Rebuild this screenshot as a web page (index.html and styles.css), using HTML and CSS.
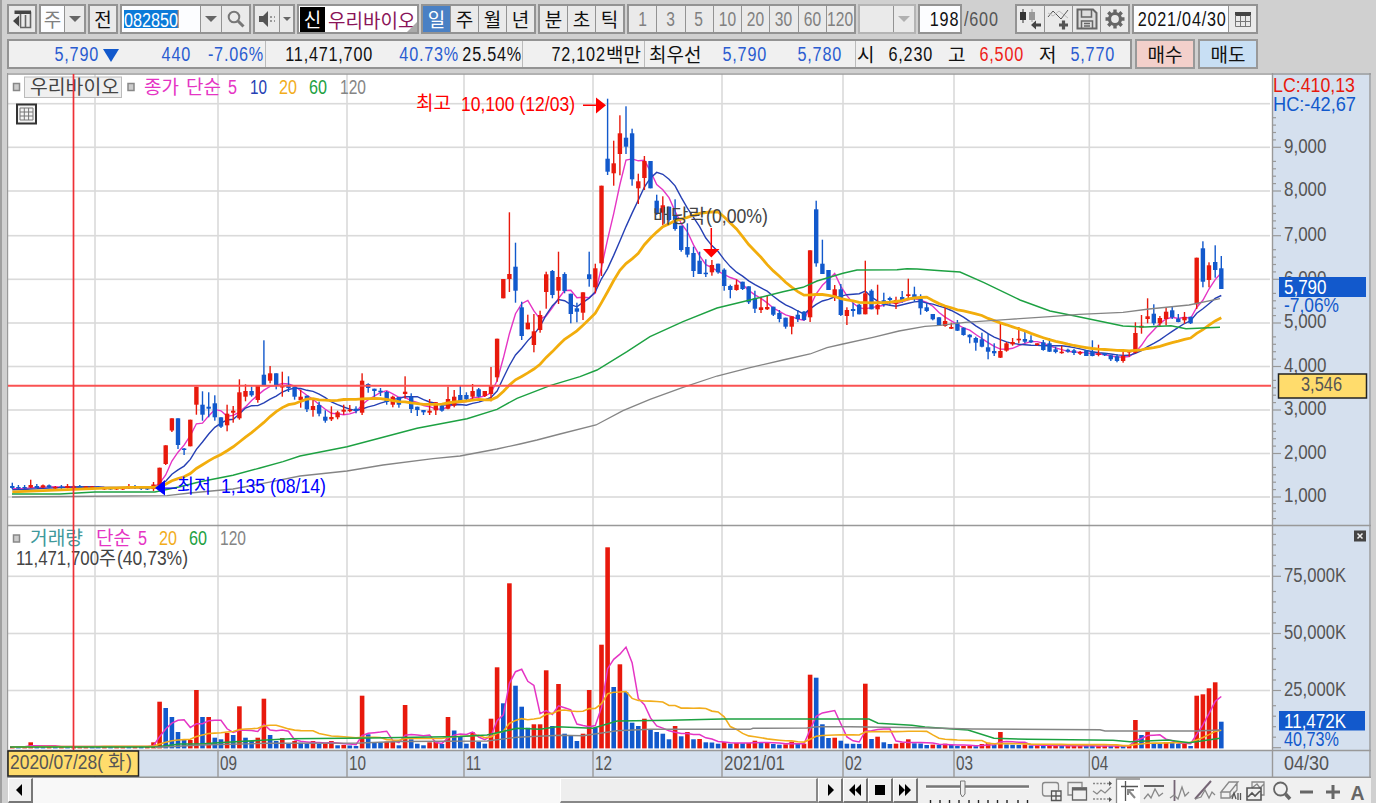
FILE: index.html
```
<!DOCTYPE html>
<html lang="ko">
<head>
    <meta charset="UTF-8">
    <title>우리바이오 차트</title>
    <link rel="stylesheet" href="styles.css">
</head>
<body>
    <div class="ventana">
        <!-- Barra superior -->
        <div class="toolbar">
            <div class="group w30"><button class="cell grow"><svg width="22" height="22" viewBox="0 0 22 22"><path d="M4 4.500H19.500V19.500H9M9.500 6V19M14.500 7V19" fill="none" stroke="#666" stroke-width="1.600"/><path d="M3.500 2.500H20V6H3.500ZM2 13L8 7.500V18.500Z" fill="#444"/></svg></button></div>
            <div class="group w47"><span class="cell white grow gray">주</span><button class="cell w20"><i class="down"></i></button></div>
            <div class="group w30"><button class="cell grow">전</button></div>
            <div class="group w131">
                <span class="cell white grow left"><span class="n sel">082850</span></span>
                <button class="cell w21"><i class="down"></i></button>
                <button class="cell w29"><svg width="20" height="20" viewBox="0 0 20 20"><circle cx="8" cy="8" r="5.300" fill="none" stroke="#777" stroke-width="2"/><path d="M12 12L17.500 17.500" stroke="#777" stroke-width="3"/></svg></button>
            </div>
            <div class="group w42"><button class="cell grow"><svg width="20" height="20" viewBox="0 0 20 20"><path d="M2 7H6L11 2V18L6 13H2Z" fill="#555"/><path d="M13 7h2v2h-2zM13 11h2v2h-2zM17 7h1v2h-1zM17 11h1v2h-1z" fill="#999"/></svg></button><button class="cell w15"><i class="down small"></i></button></div>
            <div class="group w122 white name"><b class="tag">신</b><span>우리바이오</span></div>
            <div class="group w115"><button class="cell on">일</button><button class="cell">주</button><button class="cell">월</button><button class="cell">년</button></div>
            <div class="group w87"><button class="cell">분</button><button class="cell">초</button><button class="cell">틱</button></div>
            <div class="group w229 gray period"><button class="cell"><span class="n">1</span></button><button class="cell"><span class="n">3</span></button><button class="cell"><span class="n">5</span></button><button class="cell"><span class="n">10</span></button><button class="cell"><span class="n">20</span></button><button class="cell"><span class="n">30</span></button><button class="cell"><span class="n">60</span></button><button class="cell"><span class="n">120</span></button></div>
            <div class="group w58 dim"><span class="cell grow"></span><button class="cell w21"><i class="down"></i></button></div>
            <div class="group w44"><span class="cell white grow right"><span class="n">198</span></span></div>
            <span class="total"><span class="n">/600</span></span>
            <div class="group w115 icons">
                <button class="cell"><svg width="24" height="24" viewBox="0 0 24 24"><path d="M1 5h6v8H1zM3.500 2h1v14h-1z" fill="#333"/><path d="M10 5h6v8h-6zM12.500 2h1v13h-1z" fill="#999"/><path d="M12 18l5-4.500v3h5v3h-5v3z" fill="#444"/></svg></button>
                <button class="cell"><svg width="24" height="24" viewBox="0 0 24 24"><path d="M1 10L6 4L14 12L21 3" fill="none" stroke="#555"/><path d="M1 6L6 9L12 4L21 11" fill="none" stroke="#bbb"/><path d="M12 18h9M16.500 13.500v9" stroke="#555" stroke-width="3.200"/></svg></button>
                <button class="cell"><svg width="24" height="24" viewBox="0 0 24 24"><path d="M2.500 2.500H18L21.500 6V21.500H2.500Z" fill="#ddd" stroke="#666" stroke-width="2"/><path d="M6.500 3v7h10V3M6.500 21v-7h11v7M9 16.500h6M9 19h6" fill="none" stroke="#666" stroke-width="1.500"/></svg></button>
                <button class="cell"><svg width="24" height="24" viewBox="0 0 24 24"><circle cx="12" cy="12" r="5.500" fill="none" stroke="#666" stroke-width="3.200"/><path d="M12 2.500V6M12 18v3.500M2.500 12H6M18 12h3.500M5.300 5.300l2.500 2.500M16.200 16.200l2.500 2.500M18.700 5.300l-2.500 2.500M7.800 16.200l-2.500 2.500" stroke="#666" stroke-width="3.400"/></svg></button>
            </div>
            <div class="group w126"><span class="cell white grow right"><span class="n">2021/04/30</span></span><button class="cell w28"><svg width="18" height="18" viewBox="0 0 18 18"><path d="M1 2h16v4H1z" fill="#444"/><path d="M1.500 5V16.500H16.500V5M6.500 6v10M11.500 6v10M2 11.500h14" fill="none" stroke="#777"/></svg></button></div>
        </div>

        <!-- Precio actual -->
        <div class="quote">
            <div class="strip">
                <div class="part p1 blue"><span class="n v1">5,790</span><i class="fall"></i><span class="n v2">440</span><span class="n v3">-7.06%</span></div>
                <div class="part p2"><span class="n v4">11,471,700</span><span class="n v5 blue">40.73%</span><span class="n v6">25.54%</span></div>
                <div class="part p3"><span class="n">72,102</span><span>백만</span></div>
                <div class="part p4"><span>최우선</span><span class="n v7 blue">5,790</span><span class="n v8 blue">5,780</span></div>
                <div class="part p5"><span class="k">시</span><span class="n v9">6,230</span><span class="k">고</span><span class="n v9 red">6,500</span><span class="k">저</span><span class="n v9 blue">5,770</span></div>
            </div>
            <button class="order buy">매수</button>
            <button class="order sell">매도</button>
        </div>

        <svg class="chart" width="1364" height="705" viewBox="7 73 1364 705">
            <rect x="7" y="73" width="1364" height="705" fill="#fff"/>
            <rect x="1272" y="73" width="99" height="705" fill="#d5e0ee"/>
            <rect x="7" y="750" width="1364" height="28" fill="#d5e0ee"/>
            <g id="grid"></g>
            <g id="volume"></g>
            <g id="price"></g>
            <path d="M7 74H1371M7.500 73V778M7 525.500H1371M7 750.500H1371M7 777.300H1371M1272.500 73V778M1370 73V778" stroke="#999" stroke-width="1.400" fill="none"/>
            <g id="ticks"></g>

            <!-- Leyenda -->
            <g class="box"><rect x="13.500" y="83.500" width="6" height="7"/><rect x="128" y="83.500" width="6" height="7"/><rect x="13.500" y="535" width="6" height="7"/></g>
            <rect x="24.500" y="77" width="97" height="20.500" fill="#eee" fill-opacity=".9" stroke="#bbb"/>
            <path d="M17 104.500H36V123.500H17Z" fill="#f4f4f4" stroke="#333" stroke-width="2"/>
            <path d="M20 108H33V120H20ZM20 112H33M20 116H33M24.300 108V120M28.600 108V120" fill="none" stroke="#777"/>
            <path d="M8 385.800H1271" stroke="#fa5252" stroke-width="2"/>
            <g id="labels"></g>
            <path d="M73.500 74V750" stroke="#ee3036" stroke-width="1.700"/>
            <path d="M583 105.300H600M711.300 228V250" stroke="#f00" stroke-width="1.500"/>
            <path d="M596 97.500L606 105.300L596 113.500ZM703 249H719.500L711.300 257.500Z" fill="#f00"/>
            <path d="M165 480V495.500L155 488ZM165 487.500H177V488.700H165Z" fill="#00f"/>

            <rect x="1279" y="277" width="87" height="20" fill="#1259cc"/>
            <rect x="1279" y="711" width="86" height="19.500" fill="#1259cc"/>
            <rect x="1278.500" y="374" width="88" height="24" fill="#ffdc6c" stroke="#222" stroke-width="1.500"/>
            <rect x="8" y="751" width="130.500" height="25" fill="#ffdc6c" stroke="#222" stroke-width="1.500"/>
            <rect x="1354" y="530.500" width="12" height="11" fill="#444"/>
            <path d="M1357.500 533.500L1362.500 538.500M1362.500 533.500L1357.500 538.500" stroke="#eee" stroke-width="1.500"/>
            <g id="tags"></g>
        </svg>

        <!-- Barra inferior -->
        <div class="bottom">
            <button class="sb"><svg width="10" height="12" viewBox="0 0 10 12"><path d="M7 0V12L1 6Z"/></svg></button>
            <div class="track"><div class="thumb"></div></div>
            <button class="sb"><svg width="10" height="12" viewBox="0 0 10 12"><path d="M3 0V12L9 6Z"/></svg></button>
            <button class="sb"><svg width="14" height="12" viewBox="0 0 14 12"><path d="M7 0V12L1 6ZM13 0V12L7 6Z"/></svg></button>
            <button class="sb"><svg width="10" height="12" viewBox="0 0 10 12"><path d="M0 1H10V11H0Z"/></svg></button>
            <button class="sb"><svg width="14" height="12" viewBox="0 0 14 12"><path d="M1 0V12L7 6ZM7 0V12L13 6Z"/></svg></button>
            <svg class="slider" width="118" height="25" viewBox="918 778 118 25"><path d="M926 786.500H1029" stroke="#777" stroke-width="2.500"/><path d="M926 788.500H1029" stroke="#fff"/><path d="M960.500 781H965V794L962.500 797L960.500 794Z" fill="#eee" stroke="#777"/><path d="M930.500 800v3M940 800v3M949.500 800v3M959 800v3M969 800v3M978.500 800v3M988 800v3M997.500 800v3M1007 800v3M1018 800v3M1027.500 800v3" stroke="#222" stroke-width="1.400"/></svg>
            <svg width="335" height="25" viewBox="1036 778 335 25" fill="none" stroke="#888" stroke-width="1.300">
                <path d="M1116 778H1140V803H1116Z" fill="#fff" stroke="none"/><path d="M1116.500 803V779H1140" stroke="#888"/>
                <path d="M1051 796H1045Q1042.500 796 1042.500 793V785Q1042.500 782.500 1045 782.500H1056Q1058.500 782.500 1058.500 785V790"/><path d="M1051.500 791H1061V800.500H1051.500ZM1056 791V800.500M1051.500 796H1061" stroke="#555"/>
                <path d="M1072 795H1068V782.500H1082V787"/><path d="M1072.500 788H1086.500V800H1072.500Z" stroke="#666"/><path d="M1072 787.500H1087V790.500H1072Z" fill="#666" stroke="none"/>
                <path d="M1093 783.500H1110M1093 799H1110" stroke-dasharray="2 1.500"/><path d="M1093 791L1097 794L1101 790L1105 793L1111 787"/><path d="M1109 781v5l3-2.500zM1109 797v5l3-2.500z" fill="#555" stroke="none"/>
                <path d="M1121 786.500H1138M1125.500 781V801" stroke="#555"/><path d="M1135 798L1128 790M1128 795V790H1134" stroke="#888" stroke-width="2"/>
                <path d="M1144 786H1164" stroke="#555" stroke-width="1.800"/><path d="M1144 799L1148 794L1151 798L1155 789L1159 796L1163 793"/>
                <path d="M1174.500 780V801" stroke="#756575" stroke-width="1.800"/><path d="M1170 798L1174 795L1178 799L1182 787L1185 796L1189 792"/>
                <path d="M1195 799L1211 781" stroke="#756575" stroke-width="2"/><path d="M1195 799L1201 797L1205 790L1209 798L1212 792L1215 795"/>
                <path d="M1221 792L1229 782H1238L1230 792ZM1221 792V798H1230V792M1230 798L1237 790V783"/><path d="M1232 799L1234 793L1236 799M1238 793V800M1240.500 793V800" stroke="#555"/>
                <path d="M1252 788V782H1264V795H1261M1252 788L1257 784L1260 788L1264 784"/><path d="M1247 788H1261V800H1247ZM1248 797L1252 793L1255 796L1260 791" stroke="#555" stroke-width="1.600"/>
                <circle cx="1280.500" cy="789" r="6.500" stroke="#666" stroke-width="1.800"/><path d="M1285.500 794L1290 799" stroke="#666" stroke-width="3.500"/>
                <path d="M1300 792H1313M1326 792H1340M1333 785V799" stroke="#666" stroke-width="3"/>
                <text x="1350.500" y="799.500" class="biga" textLength="14" lengthAdjust="spacingAndGlyphs">A</text>
            </svg>
        </div>
    </div>
    <script src="chart.js"></script>
</body>
</html>
```
FILE: styles.css
```
* {
    box-sizing: border-box;
}

body {
    margin: 0;
    width: 1376px;
    height: 803px;
    overflow: hidden;
    background-color: #d0d0d0;
    font-family: "Noto Sans CJK KR", sans-serif;
    font-size: 19px;
    color: #111;
}

.ventana {
    height: 803px;
    border-left: 2px solid #a0a0a0;
    padding: 4px 0 0 5px;
    display: flex;
    flex-direction: column;
}

.toolbar {
    display: flex;
    gap: 2px;
    height: 30px;
    flex: none;
}

.group {
    display: flex;
    flex: none;
    height: 30px;
    border: 2px solid #939393;
    background-color: #939393;
    gap: 1px;
}

.cell {
    flex: 1 1 0;
    min-width: 0;
    display: flex;
    align-items: center;
    justify-content: center;
    overflow: hidden;
    padding: 0;
    border: 0;
    background-color: #eaeaea;
    font: inherit;
    line-height: 24px;
    color: inherit;
    white-space: nowrap;
}

/* condensed digits */
.n {
    display: flex;
    justify-content: flex-end;
    flex: none;
    font-family: "Liberation Sans", sans-serif;
    font-size: 20.5px;
    letter-spacing: 1px;
    transform: scaleX(0.79);
    transform-origin: right;
}

.grow {
    flex: 1 1 0;
}

.white {
    background-color: #fcfdff;
}

.gray {
    color: #808080;
}

.left {
    justify-content: flex-start;
    padding-left: 2px;
}

.right {
    justify-content: flex-end;
    padding-right: 1px;
}

.period .n {
    letter-spacing: 0;
    transform: scaleX(0.76);
    transform-origin: center;
}

.w15, .w20, .w21, .w28, .w29 {
    flex: none;
}

.w15 { width: 13px; }
.w20 { width: 19px; }
.w21 { width: 20px; }
.w28 { width: 27px; }
.w29 { width: 27px; }
.w30 { width: 30px; }
.w42 { width: 42px; }
.w44 { width: 44px; }
.w47 { width: 47px; }
.w58 { width: 58px; }
.w87 { width: 87px; }
.w115 { width: 115px; }
.w122 { width: 122px; }
.w126 { width: 126px; }
.w131 { width: 131px; }
.w229 { width: 229px; }

.sel {
    background-color: #0b7ad8;
    color: #fff;
    height: 18px;
    line-height: 19px;
    letter-spacing: 0;
    transform-origin: left;
    border-right: 1px solid #f08030;
}

.down {
    border: 6px solid transparent;
    border-top: 6px solid #666;
    border-bottom: 0;
}

.small {
    border-width: 4px;
    border-top-width: 4px;
}

.dim .down {
    border-top-color: #b0b0b0;
}

.dim {
    border-color: #b4b4b4;
}

.name {
    background-color: #fff;
    color: #8a1458;
    align-items: center;
    gap: 3px;
    position: relative;
}

.name::after {
    content: "";
    position: absolute;
    right: 0;
    bottom: 0;
    border: 5px solid #aaa;
    border-top-color: transparent;
    border-left-color: transparent;
}

.name span {
    white-space: nowrap;
}

.tag {
    flex: none;
    width: 25px;
    height: 25px;
    line-height: 24px;
    margin-left: 1px;
    text-align: center;
    background-color: #000;
    color: #fff;
    font-weight: normal;
}

.on {
    background-color: #4a80c4;
    color: #fff;
}

.total {
    width: 51px;
    line-height: 30px;
    color: #555;
    flex: none;
    margin-right: -2px;
}

.total .n {
    justify-content: flex-start;
    transform-origin: left;
}

.quote {
    display: flex;
    gap: 3px;
    height: 30px;
    margin-top: 5px;
    flex: none;
}

.strip {
    display: flex;
    width: 1125px;
    border: 2px solid #939393;
    background-color: #f0f0f0;
    line-height: 26px;
}

.part {
    display: flex;
    flex: none;
    border-right: 1px solid #bbb;
    white-space: nowrap;
}

.part span {
    flex: none;
}

/* widths are before the 0.79 scale only for the text, not for the box */
.p1 { width: 257px; }
.p2 { width: 257px; }
.p3 { width: 122px; justify-content: flex-end; padding-right: 3px; }
.p4 { width: 211px; padding-left: 4px; }
.p5 { width: 262px; padding-left: 1px; gap: 15px; border: 0; }
.v1 { width: 90px; }
.v2 { width: 72px; }
.v3 { width: 73px; }
.v4 { width: 107px; }
.v5 { width: 86px; }
.v6 { width: 63px; }
.v7 { width: 66px; }
.v8 { width: 75px; }
.v9 { width: 45px; }
.k { width: 16px; }

.fall {
    margin: 8px 0 0 4px;
    width: 16px;
    height: 0;
    border: 8px solid transparent;
    border-top: 13px solid #1259cc;
    border-bottom: 0;
}

.blue {
    color: #2a5cd0;
}

.red {
    color: #ee2218;
}

.order {
    width: 60px;
    border: 2px solid #999;
    padding: 0;
    font: inherit;
    line-height: 24px;
    color: #111;
}

.buy {
    background-color: #f3d0cb;
}

.sell {
    background-color: #c8dff4;
}

.chart {
    display: block;
    flex: none;
    margin-top: 4px;
    font-family: "Liberation Sans", "Noto Sans CJK KR", sans-serif;
}

.chart text {
    white-space: pre;
}

.box rect {
    fill: #ccc;
    stroke: #888;
    stroke-width: 1.5;
}

.bottom {
    display: flex;
    height: 25px;
    flex: none;
    margin-left: 1px;
    width: 1363px;
    background-color: #f0f0f0;
}

.bottom > svg {
    flex: none;
}

.sb {
    width: 25px;
    height: 25px;
    flex: none;
    display: flex;
    align-items: center;
    justify-content: center;
    padding: 0;
    border: 1px solid #fff;
    border-right: 2px solid #777;
    border-bottom: 2px solid #777;
    background-color: #f0f0f0;
}

.track {
    flex: 1;
    background-color: #f8f8f8;
    display: flex;
    justify-content: flex-end;
}

.thumb {
    width: 258px;
    background-color: #eee;
    border: 1px solid #fff;
    border-right: 2px solid #888;
    border-bottom: 2px solid #888;
}

.biga {
    font: bold 21px "Liberation Sans", sans-serif;
    fill: #666;
    stroke: none;
}
```
FILE: chart.js
```
const NS = 'http://www.w3.org/2000/svg';
const RED = '#e8190c';
const BLUE = '#1259cc';

function add(parent, tag, attrs, text) {
    const el = document.createElementNS(NS, tag);
    for (const k in attrs) el.setAttribute(k, attrs[k]);
    if (text) el.textContent = text;
    document.getElementById(parent).appendChild(el);
}

// one candle per row: colour, high, body top, body bottom, low
const candles = `
b 482.7 486 488 489
b 485 487 488.5 489
b 485 487 488.5 489
r 479.7 485 487.5 488
b 484 486 488 488
r 484.5 485.300 487.500 488
b 484.5 485.300 487.500 488
r 486 487 488 490
b 485 486.5 488 489
r 484 486 488 488.500
r 485 486.500 488 488
b 485 486 488.500 489
r 486 486.500 487.500 488
r 486 486.500 487.500 488
b 486 486.500 488 488.500
r 487 488 489.500 490
b 487 488 489 490
r 487 488 489.500 490
r 487 488 489.500 490
r 484 486 488 489
b 485 486 487 489
b 486 487.500 488.500 490
b 486 488 489 490
r 482 484.500 489 491
r 467.7 467.7 488 488
r 445.3 445.3 464 465
r 418.3 418.3 430.5 432
b 418.3 418.3 445 449
b 448 448.5 449.5 455
r 419.7 419.7 446.3 446.3
r 386.7 386.7 404.7 414.7
b 391.3 404.7 414.7 420.7
b 392.3 406.7 408.7 417.3
b 395.3 403.3 417.3 420.7
b 417.3 417.3 426.7 428
r 404.7 413.7 425.3 431.3
r 406 410.7 412.7 422.7
r 379.3 392.3 418.3 419.7
r 384.3 391 396.7 401.3
b 386.7 391 395.3 396.7
r 386 386 400 402.7
b 340.3 374.7 386 386
r 366 373.3 380.7 383.3
b 373.3 373.3 386 389.3
r 371.7 386 387.3 396.7
b 376.3 384.7 388 392
b 386.7 386.7 396.7 399.7
r 389.7 396.7 400 407.7
b 395.7 395.7 409.3 412
r 398 406 410 416.7
b 401.7 405 413.7 416.3
b 410.3 416.7 420.7 422.7
r 406.3 417 419.3 421
r 410.7 412.3 417.3 419.3
r 404.7 409.7 411.7 414.7
r 405 409.7 411 412.3
b 406.3 408.7 411 413.3
r 373.3 380.7 412.7 415
b 383.3 384 388 392.7
b 388.7 388.7 391 396.7
b 388 390.7 392 396
b 391 392 402 404.7
r 395.7 396.7 404.7 407.3
b 397 397 404.7 407.7
r 376.3 391.7 394 398.7
b 393.3 397 409 413
b 406.7 406.7 410 416
b 410 410 412.3 415
r 399 410.7 412.7 415
r 402 402.3 410.3 415
b 404.7 405.7 410.7 411.7
r 386.7 399 408.7 409.3
r 390 396.7 405.7 407.3
b 386 395 402.3 403
b 392.3 395 399.3 400.7
r 384 391 396.7 400.7
b 388 389.3 396.7 397.3
r 391 391 396 397
r 367 386 394 401.3
r 338.7 338.7 377.3 381.7
r 279 279 298.3 298.3
r 212.3 274 279 292
b 242.7 266.7 290.7 302.7
b 301.7 307.3 336 340
r 314.7 322.7 329.3 329.3
r 314 331.3 345 352.3
r 310.7 315 330 332.7
r 271.7 274.3 292 308.7
b 270 271 295 298.3
r 251.7 277 290.7 304
b 272.3 274 291 293.3
b 293.7 293.7 314 323.3
b 302.7 308.3 311.7 322.3
r 292.3 292.3 312.7 320
b 251.7 274.3 279 286.7
r 263.7 268.3 287.3 293
r 185.7 185.7 263.3 276
b 98.7 158.7 171.7 175
r 140.7 163.3 173.3 185.7
r 115.3 133.3 154 175.3
b 106.3 137.7 146.7 154
b 128.7 133.3 179.3 185.7
r 173.7 181.3 188.3 204
r 156 161 178 190
b 161 161 188.3 188.3
b 194.7 200.7 213.3 215
r 196.3 205.3 212.7 225
b 206.7 206.7 220 221.7
b 199.3 215 229 230.7
b 225.7 225.7 250 251.7
b 223.3 247 254.7 257.3
b 246.7 253 271 277
b 251.7 260.7 274 274
b 259.3 272.7 274 277
r 260 265 272.3 275.7
b 263.7 263.7 272.3 273.7
b 268.3 269.7 286 290.7
b 284.7 286 290 298.3
r 279.3 284.7 290 290.7
b 281.7 281.7 289 290
b 286.3 286.3 302.3 304
b 290.7 298.3 308.7 313
r 296.7 307.3 310 313
r 295.3 307 309.3 310
b 306.7 306.7 314.7 316
b 310 313 319 322.3
b 317.7 317.7 326.7 328.7
r 316.3 316.3 326.7 334.3
b 310 314.7 319 322
b 311 311.7 320 320.7
r 250.3 250.3 317.3 322
b 200.7 209.3 263.3 266.7
b 239.7 263.7 274 274
b 270 270 290 290
r 285 289.3 296 301
b 284 289.3 315 316
r 307.3 310 316 325
b 302.7 309 311 316.7
b 304 304.7 314.3 314.3
r 260.7 293.3 314.3 314.3
b 289.3 290.7 309.3 309.3
r 284.7 304.7 309.3 314.7
b 292.7 300.3 304.7 306.7
b 296.7 298 300 304.7
r 296.7 300 303.7 309
b 291 297 300 302.7
r 278.7 294.3 296 300
b 286.7 294.3 298.3 301.7
b 294.3 298.7 308.3 314.7
b 303.3 307.3 311 312
b 314 314 319.3 320.3
b 317 317.3 325.7 326
r 305 321 326 326.7
r 322.7 327 328.7 329
b 320 322.7 330.7 331
b 327.3 327.7 335 335.7
b 334.3 334.7 337.3 343.3
b 336.7 338 342.7 350.7
b 332.7 339.3 346.7 347.3
b 333.3 347.3 351.7 359.3
b 343.3 351 353.3 356
r 322.3 351 357.7 358
r 342 343.3 350.7 351.7
r 338 342 344.3 345.7
r 327 338.7 340.3 343.3
b 330.7 339 341.7 343.3
b 335.3 340.3 342.3 343
r 343.3 343.3 345 345.7
b 340 342.3 350 350.7
b 338.3 343.3 351.7 352
b 346.7 349.3 352 353.3
r 345.7 351.7 353 353.7
b 348.7 349.7 351.7 352.7
b 349 350.3 353 355
r 351 352 353.7 355
b 350.3 350.3 356 356
b 340.3 351.7 356 356.3
r 344.7 353.3 355 356.3
b 353 353 355.3 356
b 355 355.3 359.3 361
b 354 356.3 361 362.3
r 351.7 356 361 362.7
r 350 351 352 356.7
r 322.3 333 352.7 353.3
r 315 325.7 327.7 333.7
r 298.3 316.3 319 323.3
b 304.3 313.7 323.3 325.3
r 316 318 323.3 327
r 307.7 311.7 319 325.3
b 307 310.3 317.3 319
b 314 318.7 322 322.3
r 312 317 320.3 323.7
b 316.7 316.7 323.3 324
r 257.7 257.7 304.3 309
b 241.3 248.3 281.7 287.3
r 262.3 265.3 280 287.3
b 245.3 262 270 277.7
b 256 268.3 289 289
`.trim().split('\n').map(l => {
    const p = l.split(' ');
    return [p[0]].concat(p.slice(1).map(Number));
});

// top of every volume bar
const vol = [
    746.5, 746.6, 746.5, 742.3, 746.5, 746.6, 746.5, 746.6, 746.5, 746.6, 746.6, 746.5,
    746.5, 746.6, 746.7, 746.5, 746.6, 746.6, 746.5, 746.6, 746.5, 746.6, 746.5, 742.3,
    701.7, 708, 717, 732, 740, 740, 690, 717, 717, 737.7, 739.3, 733, 735, 706.3, 737.7, 741,
    737.7, 698.7, 735, 741, 738, 744, 741, 742.7, 743.7, 741, 743.7, 743.3, 741, 745.3, 745, 745.5,
    746, 695.7, 734.3, 742, 742.5, 741.7, 741.7, 745.3, 705, 739.3, 743.7, 745.3, 742.3, 741.7, 744,
    717, 730.5, 736.7, 743.7, 732.3, 741.7, 743.7, 718.7, 667.3, 703.3, 583.3, 685.7, 706.7, 727.7,
    724.3, 724.3, 670.3, 726, 684, 733.7, 735.3, 741, 733.7, 690, 727.7, 644.7, 547.3, 687, 664.3,
    692, 722.7, 726, 718.7, 730, 732, 733.7, 739.3, 726, 736.3, 732, 739.3, 739, 742.3, 742.5, 743.7,
    742, 743.7, 743, 743.3, 743, 740.7, 743, 742.9, 744, 744.7, 744.3, 741.7, 744, 743.7, 674.7,
    677.7, 724.3, 738, 737.7, 740.7, 743.7, 743.8, 743.9, 683.7, 739, 736.7, 742.3, 744, 743.7,
    742.7, 739.3, 743.3, 743.5, 745, 744.6, 745, 743.7, 745, 746, 746, 745.9, 746.2, 744, 742.7,
    745, 732, 744.5, 744.8, 745, 744.5, 745.5, 745.4, 745.6, 745.5, 745.5, 746, 745.8, 745.8, 745.7,
    745.9, 746, 745.9, 745.8, 746, 745.9, 746, 745.5, 720, 735, 731.7, 743.7, 743.8, 742, 742.5, 744, 743.8,
    746, 695.7, 694.3, 688.3, 682.3, 721.7
];

const x = i => 12.3 + 6.137 * i;

function average(values, n, start) {
    return values.map((v, i) => {
        let sum = 0;
        for (let k = i - n + 1; k <= i; k++) sum += k < 0 ? start : values[k];
        return x(i).toFixed(1) + ',' + (sum / n).toFixed(1);
    }).join(' ');
}

function line(parent, points, color, width) {
    add(parent, 'polyline', { points: points, fill: 'none', stroke: color, 'stroke-width': width });
}

function rect(parent, left, top, w, h, color) {
    add(parent, 'rect', { x: left.toFixed(1), y: top, width: w, height: Math.max(h, 0), fill: color });
}

function label(parent, text, left, base, width, color) {
    // hangul is drawn a little smaller than the digits
    const size = /[가-힣]/.test(text) ? 19 : 20.5;
    add(parent, 'text', {
        x: left, y: base, fill: color, 'font-size': size,
        textLength: width, lengthAdjust: 'spacingAndGlyphs'
    }, text);
}

// grid
const months = [[95, ''], [218, '09'], [347, '10'], [464, '11'], [593, '12'], [722, '2021/01'], [843, '02'], [954, '03'], [1089.3, '04']];
const priceRows = [103.7, 147.3, 191, 235.7, 279.3, 323, 366.5, 410, 453.5, 497];
const volRows = [576.3, 633.5, 690.5, 747.7];

priceRows.concat(volRows.slice(0, 3)).forEach(y => rect('grid', 8, y - 0.8, 1262, 1.6, '#dadada'));
months.forEach(m => {
    rect('grid', m[0] - 0.8, 74, 1.6, 676, '#dadada');
    rect('ticks', m[0] - 0.7, 750, 1.4, 28, '#999');
    if (m[1]) label('labels', m[1], m[0] + 2, 769.5, m[1].length > 2 ? 61 : (m[1] === '11' ? 15 : 17), '#555');
});
priceRows.slice(1).forEach((y, i) => {
    rect('ticks', 1272, y - 0.6, 9, 1.2, '#999');
    for (let k = 1; k < 5; k++) rect('ticks', 1272, y - 0.6 - 7.4 * k, 4, 1.2, '#999');
    label('labels', (9 - i) + ',000', 1284, y + 5.3, 42.5, '#555');
});
[503, 510.5, 518].forEach(y => rect('ticks', 1272, y, 4, 1.2, '#999'));
volRows.forEach((y, i) => {
    rect('ticks', 1272, y - 0.6, 9, 1.2, '#999');
    for (let k = 1; k < 5; k++) rect('ticks', 1272, y - 0.6 - 10.5 * k, 4, 1.2, '#999');
    if (i < 3) label('labels', (75 - i * 25) + ',000K', 1284, y + 5.5, 62, '#555');
});

// volume
vol.forEach((v, i) => rect('volume', x(i) - 2.3, v, 4.6, 748.4 - v, i === 0 || v <= vol[i - 1] ? RED : BLUE));
line('volume', average(vol, 5, 747), '#e535c4', 1.5);
line('volume', average(vol, 20, 747), '#f2ad1c', 1.6);
line('volume', '10,747 155,747 180,744 200,744 218,742.7 267,740 290,738.7 370,738 460,736.5 487,735 517,728.3 540,729.3 557,726.7 593,728.3 617,721 670,720.3 722,719 869,719 878,723.3 912,725.3 925,727 953,729 968,730 994,738.3 1028,739.3 1113,740.3 1130,741.7 1168,740 1189,742.7 1220,738.3', '#1da142', 1.6);
line('volume', '155,747.5 200,745 267,743.3 360,743 400,741.5 487,741 517,737.3 560,735.3 583,735.7 617,730.7 650,729.3 750,729.3 753,728.3 807,728 817,726.7 850,726.7 922,727.7 972,729 1100,729.7 1105,731 1195,731 1220,730', '#858585', 1.4);

// price averages, the long ones go over the candles
const close = candles.map(c => c[0] === 'r' ? c[2] : c[3]);
line('price', average(close, 5, 489), '#e535c4', 1.4);
line('price', average(close, 10, 490), '#2640b4', 1.4);
candles.forEach((c, i) => {
    const color = c[0] === 'r' ? RED : BLUE;
    rect('price', x(i) - 0.7, c[1], 1.4, c[4] - c[1], color);
    rect('price', x(i) - 2.2, c[2], 4.4, Math.max(c[3] - c[2], 1.5), color);
});
line('price', average(close, 20, 492), '#f2ad0c', 2.8);
line('price', '12,494 60,494 95,492 155,492 180,486.7 200,481.7 233,475.3 260,468 283,461.7 300,456 347,446.7 383,437.3 417,428.3 450,422 467,418.7 497,409.3 517,398.3 550,385.7 580,376.7 597,370 627,351.7 650,336.7 683,321.7 717,308 750,300 783,291.7 803,287.3 817,281 843,273.3 857,270 897,269.7 907,268.7 917,269 941,270.7 960,272 984,282.7 1020,300 1050,311 1075,316 1105,322.3 1123,326 1145,327 1171,325.7 1186,328.7 1220,327.3', '#1da142', 1.4);
line('price', '12,497 62,496.500 167,495.7 190,493 233,489 267,482.7 300,476 347,471 383,465 433,458.7 460,456 497,449 520,444 537,440 560,434 596,425 623,410.7 650,399.3 683,387.3 717,376 750,367.7 783,360 810,354 827,347.7 843,344 873,337.3 899,331 925,326.3 940,325.3 965,322.3 1009,319.3 1050,316.7 1079,314.3 1123,312.3 1149,309 1189,305 1220,298.7', '#858585', 1.3);

// legends and notes
label('labels', '우리바이오', 30, 94, 89, '#444');
label('labels', '종가', 144, 94, 35, '#e535c4');
label('labels', '단순', 186, 94, 35, '#e535c4');
label('labels', '5', 228, 94, 9, '#e535c4');
label('labels', '10', 250, 94, 17, '#2640b4');
label('labels', '20', 279, 94, 18, '#f2ad1c');
label('labels', '60', 309, 94, 18, '#1da142');
label('labels', '120', 340, 94, 26, '#858585');
label('labels', '최고', 416, 110, 35, '#f00');
label('labels', '10,100 (12/03)', 461, 111, 114, '#f00');
label('labels', '배당락', 653, 223, 53, '#444');
label('labels', '(0,00%)', 706, 223, 62, '#444');
label('labels', '최저', 177, 493, 34, '#00f');
label('labels', '1,135 (08/14)', 221, 493, 105, '#00f');
label('labels', '거래량', 30, 545, 53, '#40999b');
label('labels', '단순', 96, 545, 35, '#e535c4');
label('labels', '5', 138, 545, 9, '#e535c4');
label('labels', '20', 159, 545, 18, '#f2ad1c');
label('labels', '60', 189, 545, 18, '#1da142');
label('labels', '120', 220, 545, 26, '#858585');
label('labels', '11,471,700', 16, 565, 83, '#444');
label('labels', '주', 99, 565, 17, '#444');
label('labels', '(40,73%)', 117, 565, 71, '#444');
label('tags', 'LC:410,13', 1273, 92, 82, RED);
label('tags', 'HC:-42,67', 1273, 110.5, 83, BLUE);
label('tags', '5,790', 1284, 293.5, 42.5, '#fff');
label('tags', '-7,06%', 1284, 311.5, 55, BLUE);
label('tags', '3,546', 1301, 391, 41, '#555');
label('tags', '11,472K', 1284, 727.5, 62, '#fff');
label('tags', '40,73%', 1284, 745.5, 55, BLUE);
label('tags', '04/30', 1284, 769.5, 45, '#555');
label('tags', '2020/07/28(', 10, 769, 93, '#555');
label('tags', '화', 108, 769, 17, '#555');
label('tags', ')', 126, 769, 6, '#555');
```
